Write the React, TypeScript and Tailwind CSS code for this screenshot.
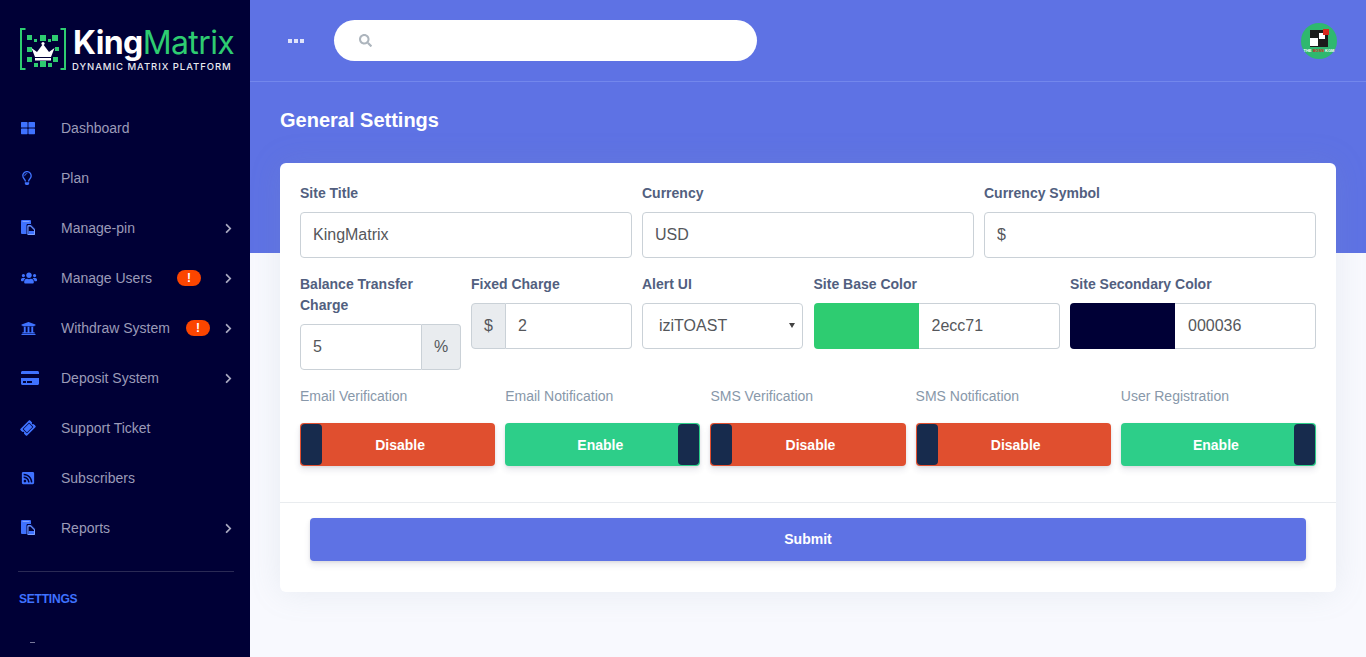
import React from "react";
import {
  FaThLarge,
  FaRegLightbulb,
  FaUsers,
  FaUniversity,
  FaCreditCard,
  FaTicketAlt,
  FaRssSquare,
  FaChevronRight,
  FaSearch,
} from "react-icons/fa";

type Item = { label: string; icon: React.ReactNode; arrow?: boolean; badge?: "a" | "b" };

function CopyIcon() {
  return (
    <svg width="15" height="16" viewBox="0 0 15 16">
      <rect x="0" y="0" width="10" height="14" rx="1" fill="#3f72ff" />
      <rect x="1.5" y="1" width="7" height="1" fill="#7fa2ff" />
      <path d="M6 4.5H10L14.5 9V15.5H6Z" fill="#3f72ff" stroke="#000036" strokeWidth="1" />
      <path d="M7 6H9.5L13.5 10V14.5H7Z" fill="#000036" stroke="#7fa2ff" strokeWidth="1" />
      <rect x="7.5" y="11" width="5.5" height="3" fill="#3f72ff" />
    </svg>
  );
}

const items: Item[] = [
  { label: "Dashboard", icon: <FaThLarge className="text-[14px] text-[#3f72ff]" /> },
  { label: "Plan", icon: <FaRegLightbulb className="-ml-[1px] text-[14px] text-[#3f72ff]" /> },
  { label: "Manage-pin", icon: <CopyIcon />, arrow: true },
  { label: "Manage Users", icon: <FaUsers className="text-[16px] text-[#3f72ff]" />, arrow: true, badge: "a" },
  { label: "Withdraw System", icon: <FaUniversity className="text-[15px] text-[#3f72ff]" />, arrow: true, badge: "b" },
  { label: "Deposit System", icon: <FaCreditCard className="text-[18px] text-[#3f72ff]" />, arrow: true },
  { label: "Support Ticket", icon: <FaTicketAlt className="text-[14px] text-[#3f72ff] -rotate-45" /> },
  { label: "Subscribers", icon: <FaRssSquare className="text-[14px] text-[#3f72ff]" /> },
  { label: "Reports", icon: <CopyIcon />, arrow: true },
];

function LogoMark() {
  const squares: [number, number, number][] = [
    [7, 7, 5], [20, 7, 6], [32, 7, 6],
    [14, 11, 3], [28, 11, 3],
    [7, 19, 5], [35, 19, 4],
    [7, 29, 5], [20, 33, 6], [33, 29, 5],
    [14, 35, 4], [28, 35, 4],
  ];
  return (
    <svg width="46" height="42" viewBox="0 0 46 42" className="shrink-0">
      <path d="M5.5 1H1V41H5.5" fill="none" stroke="#2ecc71" strokeWidth="2" />
      <path d="M40.5 1H45V41H40.5" fill="none" stroke="#2ecc71" strokeWidth="2" />
      {squares.map(([x, y, s], i) => (
        <rect key={i} x={x} y={y} width={s} height={s} fill="#2ecc71" />
      ))}
      <circle cx="23" cy="15.5" r="1.6" fill="#fff" />
      <path d="M11.5 20L17 24L23 16L29 24L34.5 20L31 29H15Z" fill="#fff" />
      <rect x="15" y="30" width="16" height="2.5" fill="#fff" />
    </svg>
  );
}

function Avatar() {
  return (
    <svg width="36" height="36" viewBox="0 0 36 36">
      <circle cx="18" cy="18" r="18" fill="#2fb86f" />
      <rect x="9" y="7" width="18" height="17" fill="#1c1c1c" />
      <rect x="9" y="15" width="8" height="8" fill="#fff" />
      <rect x="18" y="10" width="6" height="6" fill="#fff" />
      <rect x="22" y="6" width="6" height="6" fill="#d9271e" />
      <text x="18" y="28.5" textAnchor="middle" fontSize="4" fontWeight="700" fill="#fff" fontFamily="'Liberation Sans', sans-serif">
        THE <tspan fill="#d9271e">BOSS</tspan> KGM
      </text>
    </svg>
  );
}

const inputCls =
  "h-[46px] w-full min-w-0 rounded-[4px] border border-[#cad1d7] bg-white px-3 text-[16px] text-[#55575b] outline-none";
const labelCls = "mb-2 block text-[14px] font-bold leading-[21px] text-[#525f7f]";

function Field({ label, value, span }: { label: string; value: string; span: string }) {
  return (
    <div className={span}>
      <label className={labelCls}>{label}</label>
      <input className={inputCls} defaultValue={value} />
    </div>
  );
}

function Addon({ children, side }: { children: string; side: "l" | "r" }) {
  return (
    <span
      className={`flex h-[46px] shrink-0 items-center justify-center border border-[#cad1d7] bg-[#e9ecef] text-[16px] text-[#55575b] ${
        side === "l" ? "w-[35px] rounded-l-[4px] border-r" : "w-[39px] rounded-r-[4px] border-l-0"
      }`}
    >
      {children}
    </span>
  );
}

function ColorField({ label, color, value }: { label: string; color: string; value: string }) {
  return (
    <div className="col-span-3 pl-[0.5px]">
      <label className={labelCls}>{label}</label>
      <div className="flex h-[46px]">
        <div className="w-[105px] shrink-0 rounded-l-[4px]" style={{ backgroundColor: color }} />
        <input className="w-full min-w-0 rounded-r-[4px] border-y border-r border-[#cad1d7] bg-white pl-[13px] text-[16px] text-[#55575b] outline-none" defaultValue={value} />
      </div>
    </div>
  );
}

function Toggle({ label, on }: { label: string; on: boolean }) {
  return (
    <div>
      <div className="mb-4 text-[14px] leading-[21px] text-[#8898aa]">{label}</div>
      <div
        className={`flex h-[43px] items-center overflow-hidden rounded-[4px] shadow-[0_4px_6px_rgba(50,50,93,0.11),0_1px_3px_rgba(0,0,0,0.08)] ${
          on ? "flex-row-reverse bg-[#2dce89]" : "bg-[#e04f2f]"
        }`}
      >
        <div className="m-px h-[41px] w-[21px] shrink-0 rounded-[4px] bg-[#172b4d]" />
        <div className={`flex-1 pt-[2px] text-center text-[14px] font-bold text-white ${on ? "pl-[18px]" : "pr-[18px]"}`}>
          {on ? "Enable" : "Disable"}
        </div>
      </div>
    </div>
  );
}

export default function App() {
  return (
    <div className="flex h-screen overflow-hidden bg-[#f8f9fe] font-['Liberation_Sans',Arial,sans-serif]">
      <aside className="flex h-full w-[250px] shrink-0 flex-col overflow-hidden bg-[#000036]">
        <div className="flex h-[103px] shrink-0 gap-[7px] pl-[20px] pt-[28px]">
          <LogoMark />
          <div className="font-['Inter',sans-serif]">
            <div className="-mt-[3px] whitespace-nowrap text-[32px] leading-[35px] tracking-[-0.6px] text-[#2ecc71]">
              <span className="font-bold text-white">King</span>
              <span className="font-normal">Matrix</span>
            </div>
            <div className="-ml-px mt-[1px] whitespace-nowrap text-[9.5px] font-medium leading-[11px] tracking-[0.95px] text-[#e8e8f0]">
              DYNAMIC MATRIX PLATFORM
            </div>
          </div>
        </div>
        <nav>
          {items.map((it) => (
            <div key={it.label} className="flex h-[50px] items-center pl-[21px] pr-[16px]">
              <span className="flex w-[40px] shrink-0 items-center">{it.icon}</span>
              <span className="text-[14px] text-[#9b9bb8]">{it.label}</span>
              {it.badge && (
                <span
                  className={`-mt-[1px] flex h-[16px] w-[24px] items-center justify-center rounded-full bg-[#fb4500] text-[12px] font-bold text-white ${
                    it.badge === "a" ? "ml-[25px]" : "ml-[16px]"
                  }`}
                >
                  !
                </span>
              )}
              {it.arrow && <FaChevronRight className="ml-auto text-[11px] text-[#a9a9c0]" />}
            </div>
          ))}
        </nav>
        <div className="ml-[18px] mr-[16px] mt-[18px] border-t border-[#2a2a55]" />
        <div className="ml-[19px] mt-[20px] text-[12px] font-bold leading-[15px] tracking-[-0.2px] text-[#3f72ff]">SETTINGS</div>
        <div className="ml-[30px] mt-[35px] h-px w-[5px] bg-[#77779a]" />
      </aside>

      <main className="min-w-0 flex-1 bg-[linear-gradient(#5e72e4_253px,#f8f9fe_253px)]">
        <header className="flex h-[82px] items-center border-b border-[#7387ec] pl-[38px] pr-[29px]">
          <div className="flex w-[16px] gap-[2px]">
            <span className="h-[4px] w-[4px] bg-[#dfe3fa]" />
            <span className="h-[4px] w-[4px] bg-[#dfe3fa]" />
            <span className="h-[4px] w-[4px] bg-[#dfe3fa]" />
          </div>
          <div className="ml-[30px] flex h-[41px] w-[423px] items-center rounded-full bg-white pl-[25px]">
            <FaSearch className="text-[13px] text-[#adb5bd]" />
          </div>
          <div className="ml-auto">
            <Avatar />
          </div>
        </header>
        <div className="px-[30px]">
          <h1 className="mt-[23px] text-[20px] font-bold leading-[30px] text-white">General Settings</h1>
          <section className="mt-[28px] rounded-[6px] bg-white shadow-[0_0_2rem_rgba(136,152,170,0.15)]">
            <div className="px-[20px] pb-[36px] pt-[20px]">
              <div className="grid grid-cols-12 gap-x-[10px] gap-y-[16px]">
                <Field span="col-span-4" label="Site Title" value="KingMatrix" />
                <Field span="col-span-4" label="Currency" value="USD" />
                <Field span="col-span-4" label="Currency Symbol" value="$" />

                <div className="col-span-2">
                  <label className={labelCls}>Balance Transfer Charge</label>
                  <div className="flex">
                    <input className={`${inputCls} rounded-r-none`} defaultValue="5" />
                    <Addon side="r">%</Addon>
                  </div>
                </div>
                <div className="col-span-2">
                  <label className={labelCls}>Fixed Charge</label>
                  <div className="flex">
                    <Addon side="l">$</Addon>
                    <input className={`${inputCls} rounded-l-none border-l-0`} defaultValue="2" />
                  </div>
                </div>
                <div className="col-span-2">
                  <label className={labelCls}>Alert UI</label>
                  <div className="relative">
                    <select className="h-[46px] w-full appearance-none rounded-[4px] border border-[#cad1d7] bg-white pl-4 pr-2 text-[16px] text-[#55575b] outline-none" defaultValue="izi">
                      <option value="izi">iziTOAST</option>
                    </select>
                    <span className="pointer-events-none absolute right-[8px] top-[20px] h-0 w-0 border-x-[3px] border-t-[5px] border-x-transparent border-t-[#444]" />
                  </div>
                </div>
                <ColorField label="Site Base Color" color="#2ecc71" value="2ecc71" />
                <ColorField label="Site Secondary Color" color="#000036" value="000036" />
              </div>
              <div className="mt-[16px] grid grid-cols-5 gap-x-[10px]">
                <Toggle label="Email Verification" on={false} />
                <Toggle label="Email Notification" on />
                <Toggle label="SMS Verification" on={false} />
                <Toggle label="SMS Notification" on={false} />
                <Toggle label="User Registration" on />
              </div>
            </div>
            <div className="border-t border-[#e9ecef] px-[30px] pb-[31px] pt-[15px]">
              <button className="h-[43px] w-full rounded-[4px] bg-[#5e72e4] text-[14px] font-bold text-white shadow-[0_4px_6px_rgba(50,50,93,0.11),0_1px_3px_rgba(0,0,0,0.08)]">
                Submit
              </button>
            </div>
          </section>
        </div>
      </main>
    </div>
  );
}
